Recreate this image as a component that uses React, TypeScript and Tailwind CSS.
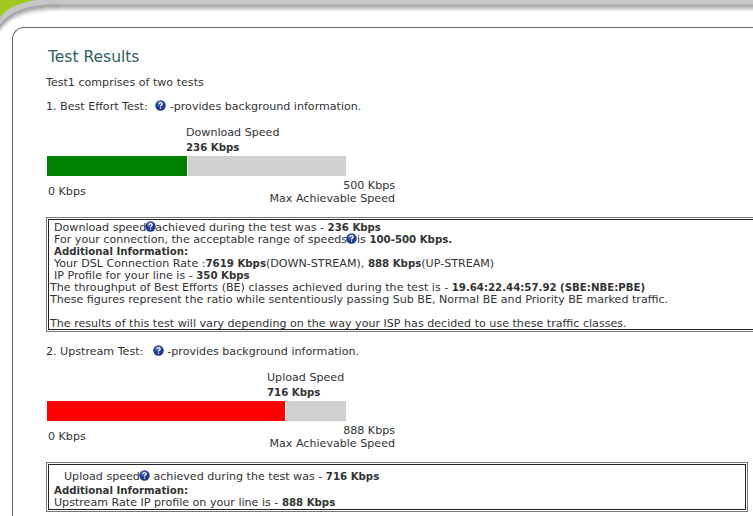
function HelpIcon({ className = '' }: { className?: string }) {
  return (
    <svg viewBox="0 0 11 11" className={`inline-block -my-[3px] h-[11px] w-[11px] align-[2px] ${className}`}>
      <circle cx="5.5" cy="5.5" r="5.2" fill="#1f3a8c" />
      <circle cx="4.8" cy="3.8" r="3" fill="#5c78c4" opacity="0.55" />
      <path d="M3.9 4.2C3.9 3 4.7 2.6 5.6 2.6S7.2 3.2 7.2 4 6.6 5 6 5.4 5.5 6 5.5 6.6" fill="none" stroke="#fff" strokeWidth="1.2" />
      <rect x="4.9" y="7.4" width="1.2" height="1.3" fill="#fff" />
    </svg>
  );
}

function Strong({ children }: { children: React.ReactNode }) {
  return <b className="text-[10.2px]">{children}</b>;
}

interface MeterProps {
  label: string;
  value: string;
  labelOffset: string;
  fill: string;
  max: string;
}

function Meter({ label, value, labelOffset, fill, max }: MeterProps) {
  return (
    <div>
      <div className={`${labelOffset} leading-[15px]`}>
        <p>{label}</p>
        <p>
          <Strong>{value}</Strong>
        </p>
      </div>
      <div className="mt-[1px] ml-[1px] flex h-5 w-[299px] bg-[#d0d0d0]">
        <div className={`${fill} border-r border-white`} />
      </div>
      <div className="mt-[3px] ml-[2px] flex w-[347px] items-center justify-between leading-[13px]">
        <span className="-mt-[2px]">0 Kbps</span>
        <div className="text-right">
          <p>{max}</p>
          <p>Max Achievable Speed</p>
        </div>
      </div>
    </div>
  );
}

const shade = ['#b0b0b0', '#a4a4a4', '#aaaaaa', '#b8b8b8', '#c8c8c8', '#d8d8d8', '#e8e8e8', '#f6f6f6'];

export default function App() {
  return (
    <div className="relative h-[516px] w-[753px] overflow-hidden bg-white font-['DejaVu_Sans',Verdana,sans-serif] text-[11.1px] text-[#333]">
      <div className="h-[12px] bg-[linear-gradient(#c6c6c6_0,#c6c6c6_4px,#a4a4a4_5px,#b8b8b8_7px,#e6e6e6_10px,#fff_12px)]" />
      <svg viewBox="0 0 60 32" className="absolute left-0 top-0 h-[32px] w-[60px]">
        <rect width="60" height="32" fill="#fff" />
        <path d="M0 0H60V4.5C30 4.5 10 10 0 26Z" fill="#c6c6c6" />
        {shade.map((c, i) => (
          <path key={c + i} d={`M-1 ${27 + i}C10 ${10 + i} 30 ${4.5 + i} 60 ${4.5 + i}`} fill="none" stroke={c} strokeWidth="1.4" />
        ))}
        <path d="M0 0H36C18 3 6 8 0 18Z" fill="#a2c81e" />
      </svg>

      <main className="relative ml-[12px] mt-[15px] h-[600px] rounded-tl-[12px] border-l border-t border-[#666] pl-[33px] pt-[20px]">
        <h1 className="ml-[2px] text-[15.5px] leading-[18px] text-[#2d6060]">Test Results</h1>
        <p className="mt-[10px] leading-[13px]">Test1 comprises of two tests</p>
        <p className="mt-[11px] leading-[13px]">
          1. Best Effort Test: <HelpIcon className="ml-[4px]" /> -provides background information.
        </p>

        <div className="mt-[12px]">
          <Meter label="Download Speed" value="236 Kbps" labelOffset="ml-[140px]" fill="w-[141px] bg-[#008000]" max="500 Kbps" />
        </div>

        <section className="mt-[12px] h-[115px] w-[720px] border border-[#777] p-[1px]">
          <div className="h-full border border-[#222] pt-[2px] leading-[12px]">
            <div className="pl-[5px]">
              <p>
                Download speed<HelpIcon className="-ml-[1px] -mr-[1px]" />achieved during the test was - <Strong>236 Kbps</Strong>
              </p>
              <p>
                For your connection, the acceptable range of speeds<HelpIcon className="-ml-[1px]" />is <Strong>100-500 Kbps.</Strong>
              </p>
              <p>
                <Strong>Additional Information:</Strong>
              </p>
              <p>
                Your DSL Connection Rate :<Strong>7619 Kbps</Strong>(DOWN-STREAM), <Strong>888 Kbps</Strong>(UP-STREAM)
              </p>
              <p>
                IP Profile for your line is - <Strong>350 Kbps</Strong>
              </p>
            </div>
            <p className="pl-[1px]">
              The throughput of Best Efforts (BE) classes achieved during the test is - <Strong>19.64:22.44:57.92 (SBE:NBE:PBE)</Strong>
            </p>
            <p className="pl-[1px]">These figures represent the ratio while sententiously passing Sub BE, Normal BE and Priority BE marked traffic.</p>
            <p className="mt-[12px] pl-[1px]">The results of this test will vary depending on the way your ISP has decided to use these traffic classes.</p>
          </div>
        </section>

        <p className="mt-[13px] leading-[13px]">
          2. Upstream Test: <HelpIcon className="ml-[6px]" /> -provides background information.
        </p>

        <div className="mt-[12px]">
          <Meter label="Upload Speed" value="716 Kbps" labelOffset="ml-[221px]" fill="w-[239px] bg-[#ff0000]" max="888 Kbps" />
        </div>

        <section className="mt-[12px] h-[50px] w-[702px] border border-[#777] p-[1px]">
          <div className="h-full border border-[#222] pt-[6px] leading-[12px]">
            <p className="mb-[2px] pl-[15px]">
              Upload speed<HelpIcon className="-ml-[1px]" /> achieved during the test was - <Strong>716 Kbps</Strong>
            </p>
            <p className="pl-[5px]">
              <Strong>Additional Information:</Strong>
            </p>
            <p className="pl-[5px]">
              Upstream Rate IP profile on your line is - <Strong>888 Kbps</Strong>
            </p>
          </div>
        </section>
      </main>
    </div>
  );
}
